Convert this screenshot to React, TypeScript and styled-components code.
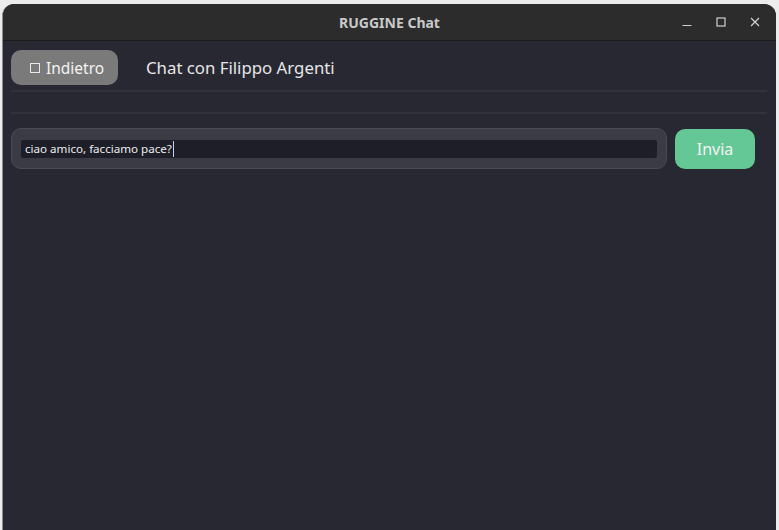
import React from "react";
import styled, { createGlobalStyle } from "styled-components";

const Global = createGlobalStyle`
  html, body { margin: 0; padding: 0; background: #e6e6e6; overflow: hidden; }
  body { font-family: "Noto Sans", "Open Sans", sans-serif; }
`;

const Desktop = styled.div`
  width: 779px;
  height: 530px;
  box-sizing: border-box;
  padding: 4px 3px 0 2px;
  background: #ececec;
  display: flex;
`;

const Window = styled.div`
  flex: 1;
  display: flex;
  flex-direction: column;
  border-radius: 12px 12px 0 0;
  overflow: hidden;
  background: #282832;
  border-left: 1px solid #8d8d8d;
`;

const TitleBar = styled.div`
  height: 36px;
  flex: none;
  background: #2c2c2c;
  border-bottom: 1px solid #1b1b1b;
  display: flex;
  align-items: center;
  justify-content: center;
  position: relative;
`;

const Title = styled.div`
  font-family: "Noto Sans", sans-serif;
  font-weight: 700;
  font-size: 14px;
  color: #c9c9c9;
`;

const Controls = styled.div`
  position: absolute;
  right: 14px;
  top: 0;
  height: 100%;
  display: flex;
  align-items: center;
  gap: 20px;
`;

const Ctl = styled.svg`
  width: 14px;
  height: 14px;
  display: block;
`;

const Content = styled.div`
  flex: 1;
  display: flex;
  flex-direction: column;
  padding: 9px 9px 0 8px;
`;

const Header = styled.div`
  display: flex;
  align-items: center;
  gap: 28px;
  height: 35px;
`;

const BackButton = styled.button`
  height: 35px;
  width: 107px;
  border: none;
  border-radius: 10px;
  background: #7a7a7a;
  color: #f2f2f2;
  font-family: "Noto Sans", sans-serif;
  font-size: 15.5px;
  display: flex;
  align-items: center;
  justify-content: flex-start;
  gap: 6px;
  padding: 0 0 0 19px;
`;

const Box = styled.span`
  width: 8px;
  height: 8px;
  border: 1px solid #eaeaea;
  display: inline-block;
`;

const ChatTitle = styled.div`
  font-size: 16.8px;
  color: #e6e6e6;
  font-family: "Noto Sans", sans-serif;
`;

const Rule = styled.div<{ $top: number }>`
  height: 2px;
  background: #32323b;
  margin-top: ${(p) => p.$top}px;
`;

const InputRow = styled.div`
  display: flex;
  align-items: center;
  gap: 8px;
  margin-top: 14px;
`;

const InputFrame = styled.div`
  width: 656px;
  height: 41px;
  box-sizing: border-box;
  border: 1px solid #4b4b56;
  border-radius: 10px;
  background: #3b3b45;
  display: flex;
  align-items: center;
  padding: 0 9px;
`;

const Field = styled.div`
  flex: 1;
  height: 18px;
  background: #1e1e28;
  border-radius: 2px;
  display: flex;
  align-items: center;
  padding-left: 4px;
  font-size: 11.6px;
  color: #ececec;
  font-family: "Noto Sans", sans-serif;
`;

const Caret = styled.span`
  display: inline-block;
  width: 1.5px;
  height: 16px;
  background: #b9d4ff;
  margin-left: 1px;
`;

const SendButton = styled.button`
  width: 80px;
  height: 40px;
  border: none;
  border-radius: 10px;
  background: #64c896;
  color: #f3f3f3;
  font-family: "Noto Sans", sans-serif;
  font-size: 16px;
  padding: 0;
`;

export default function App() {
  return (
    <>
      <Global />
      <Desktop>
        <Window>
          <TitleBar>
            <Title>RUGGINE Chat</Title>
            <Controls>
              <Ctl viewBox="0 0 14 14">
                <line x1="2.5" y1="10.5" x2="11.5" y2="10.5" stroke="#d0d0d0" strokeWidth="1.2" />
              </Ctl>
              <Ctl viewBox="0 0 14 14">
                <rect x="3" y="3" width="8" height="8" fill="none" stroke="#d0d0d0" strokeWidth="1.2" />
              </Ctl>
              <Ctl viewBox="0 0 14 14">
                <path d="M3 3 L11 11 M11 3 L3 11" stroke="#d0d0d0" strokeWidth="1.2" />
              </Ctl>
            </Controls>
          </TitleBar>
          <Content>
            <Header>
              <BackButton>
                <Box />
                Indietro
              </BackButton>
              <ChatTitle>Chat con Filippo Argenti</ChatTitle>
            </Header>
            <Rule $top={5} />
            <Rule $top={20} />
            <InputRow>
              <InputFrame>
                <Field>
                  ciao amico, facciamo pace?
                  <Caret />
                </Field>
              </InputFrame>
              <SendButton>Invia</SendButton>
            </InputRow>
          </Content>
        </Window>
      </Desktop>
    </>
  );
}
